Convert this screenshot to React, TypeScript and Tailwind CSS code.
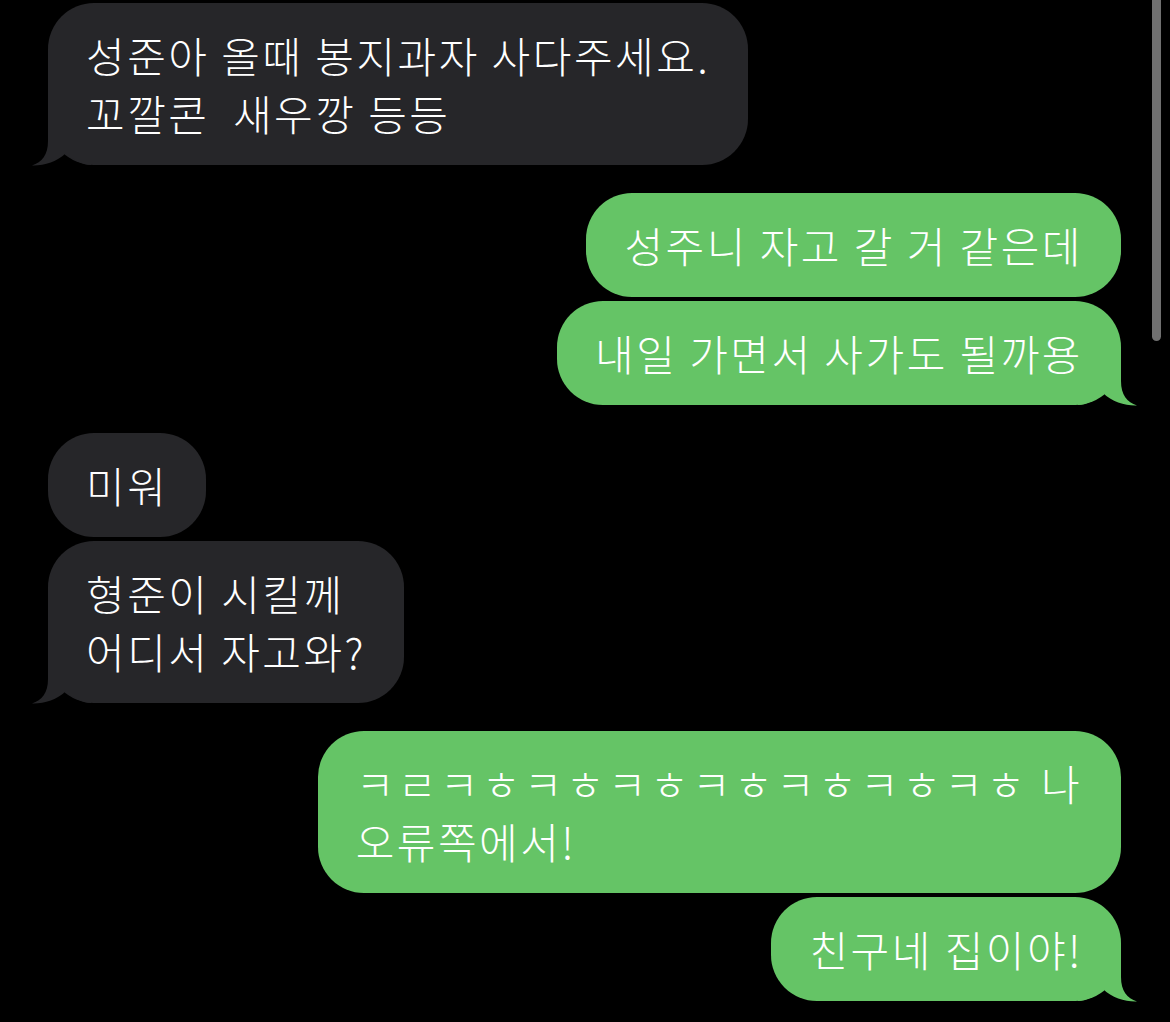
import React from 'react';

type Msg = { text: string; tail?: boolean; wide?: boolean };
type Group = { from: 'them' | 'me'; items: Msg[] };

const GROUPS: Group[] = [
  { from: 'them', items: [{ text: '성준아 올때 봉지과자 사다주세요.\n꼬깔콘  새우깡 등등', tail: true }] },
  {
    from: 'me',
    items: [{ text: '성주니 자고 갈 거 같은데' }, { text: '내일 가면서 사가도 될까용', tail: true }],
  },
  {
    from: 'them',
    items: [{ text: '미워' }, { text: '형준이 시킬께\n어디서 자고와?', tail: true }],
  },
  {
    from: 'me',
    items: [
      { text: 'ㅋㄹㅋㅎㅋㅎㅋㅎㅋㅎㅋㅎㅋㅎㅋㅎ 나\n오류쪽에서!', wide: true },
      { text: '친구네 집이야!', tail: true },
    ],
  },
];

function Tail({ side }: { side: 'left' | 'right' }) {
  const fill = side === 'right' ? '#65c466' : '#262629';
  return (
    <svg
      width="60"
      height="51"
      viewBox="0 0 60 51"
      className={
        side === 'right'
          ? 'absolute bottom-[-1px] right-[-17px]'
          : 'absolute bottom-[-1px] left-[-17px] -scale-x-100'
      }
    >
      <path d="M0 0 H43 V26 C43 40 49 47 59 50.5 C48 51 34 47 25 38 C18 45 9 49.5 0 50 Z" fill={fill} />
    </svg>
  );
}

function Bubble({ msg, from }: { msg: Msg; from: 'them' | 'me' }) {
  const mine = from === 'me';
  const [first, ...rest] = msg.text.split('\n');
  return (
    <div
      className={
        mine
          ? 'relative rounded-[46px] bg-[#65c466] px-[38px] py-[23px]'
          : 'relative rounded-[46px] bg-[#262629] px-[38px] py-[23px]'
      }
    >
      {msg.tail && <Tail side={mine ? 'right' : 'left'} />}
      <p className="relative whitespace-pre text-[42px] font-light leading-[58px] tracking-[2.5px] text-white">
        {/* the jamo run sits a little looser than the syllables */}
        <span className={msg.wide ? 'tracking-[3.4px]' : ''}>{first}</span>
        {rest.map((line, i) => (
          <React.Fragment key={i}>
            {'\n'}
            {line}
          </React.Fragment>
        ))}
      </p>
    </div>
  );
}

export default function App() {
  return (
    <div
      className="relative h-[1022px] w-[1170px] overflow-hidden bg-black"
      style={{ fontFamily: '"Noto Sans CJK KR", "Noto Sans", sans-serif' }}
    >
      <div className="flex flex-col gap-[28px] pl-[48px] pr-[49px] pt-[3px]">
        {GROUPS.map((g, i) => (
          <div key={i} className={g.from === 'me' ? 'flex flex-col items-end gap-[4px]' : 'flex flex-col items-start gap-[4px]'}>
            {g.items.map((m, j) => (
              <Bubble key={j} msg={m} from={g.from} />
            ))}
          </div>
        ))}
      </div>

      {/* scroll indicator */}
      <div className="absolute right-[9px] top-0 h-[341px] w-[9px] rounded-b-full bg-[#707070]" />
    </div>
  );
}
